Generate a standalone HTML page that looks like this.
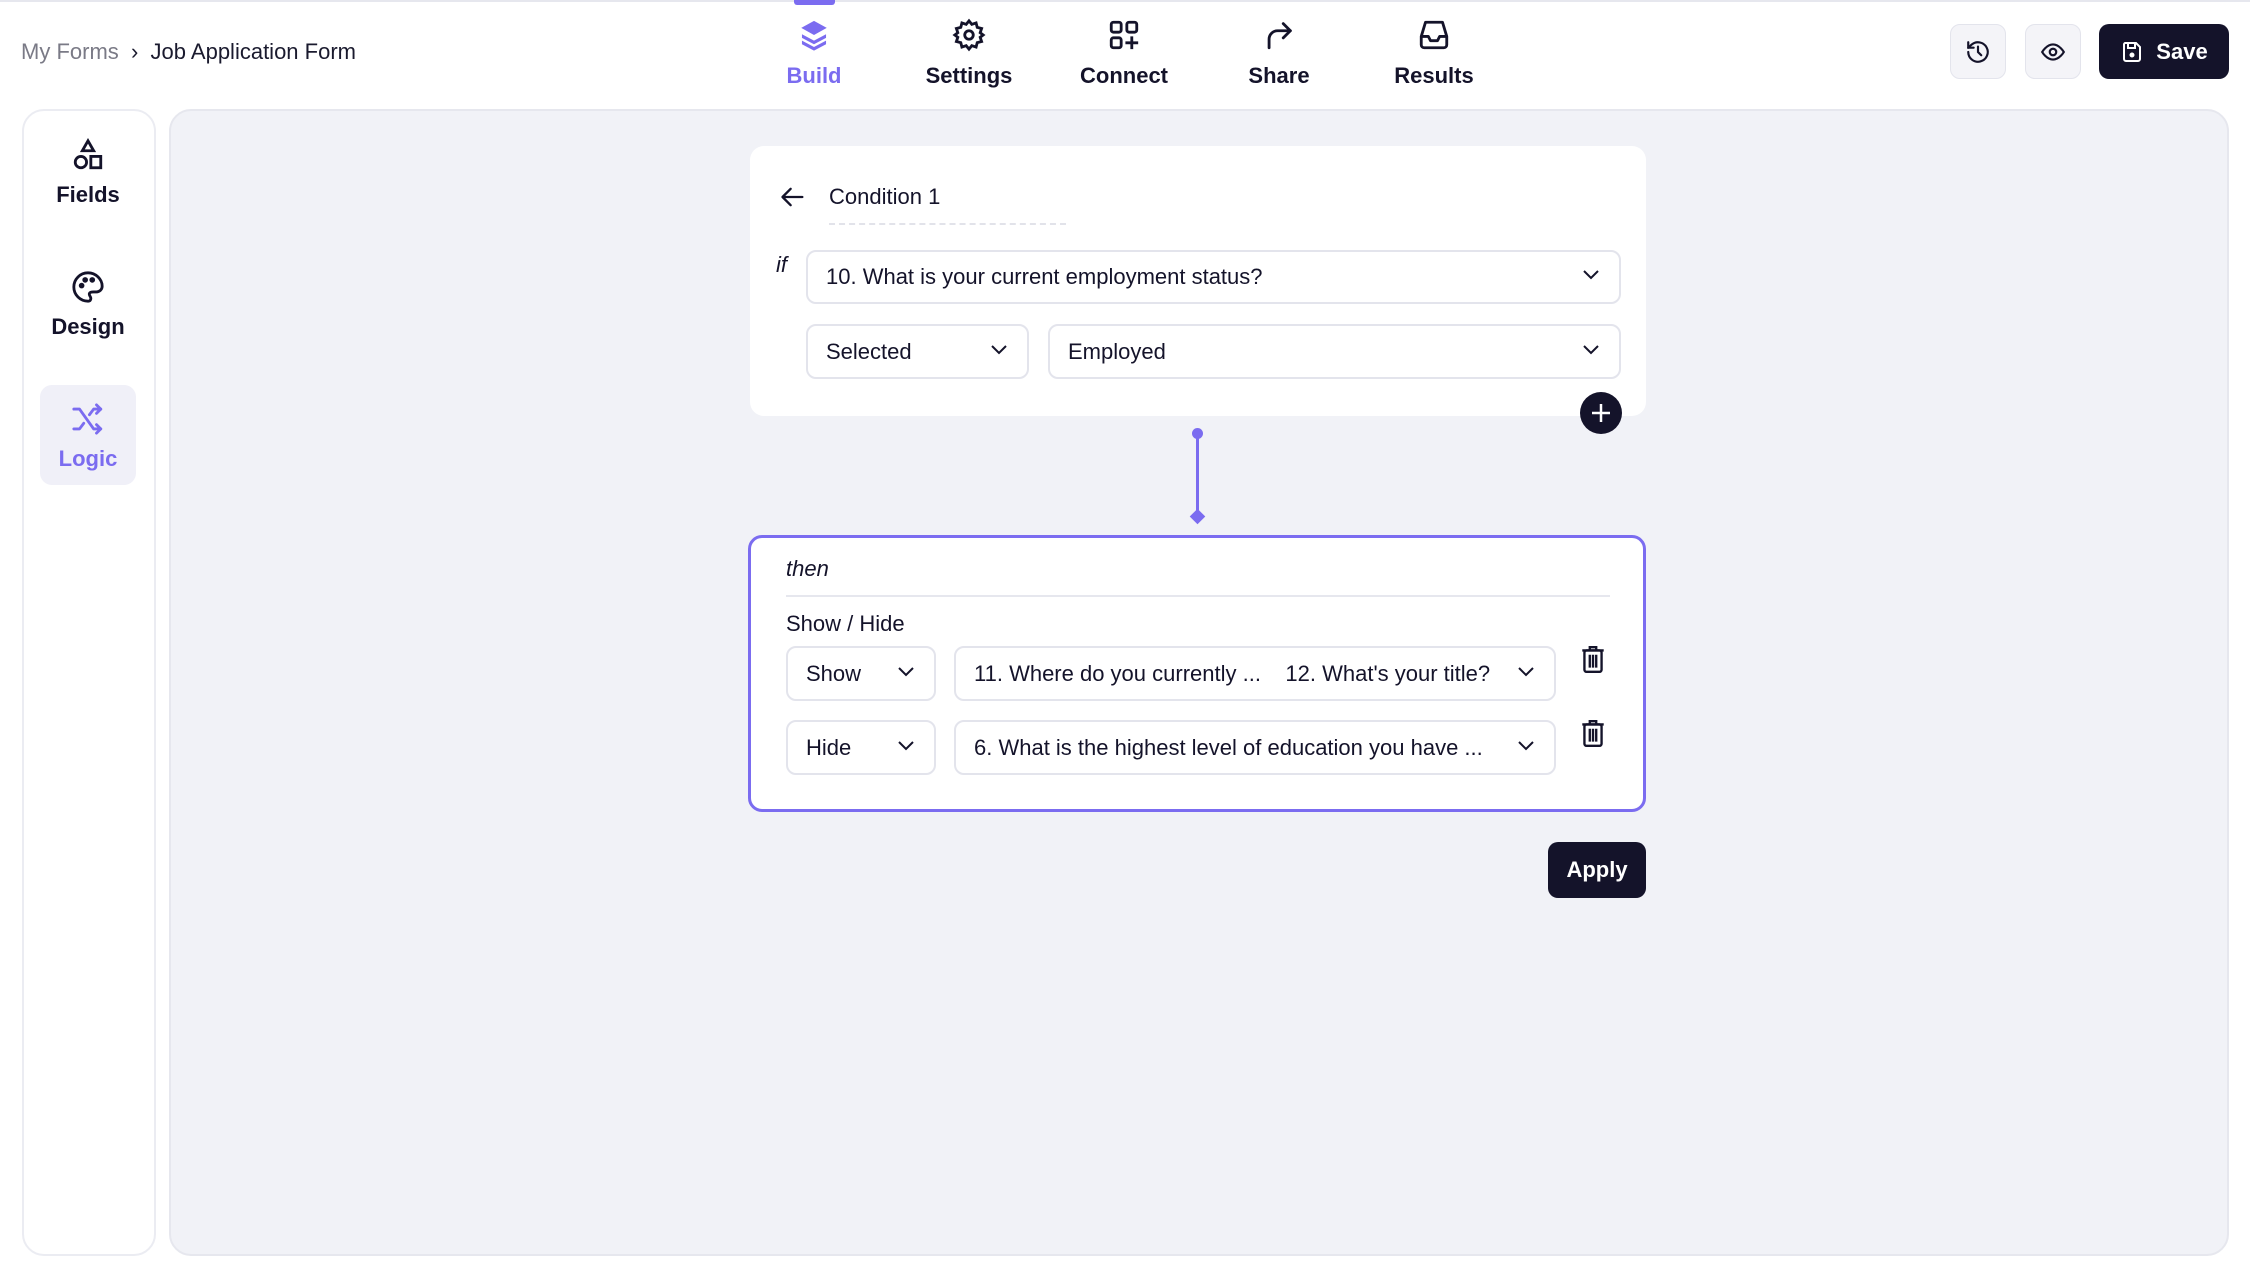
<!DOCTYPE html>
<html><head><meta charset="utf-8"><style>
*{box-sizing:border-box;margin:0;padding:0}
body{width:2250px;height:1275px;background:#fff;font-family:"Liberation Sans",sans-serif;color:#14132a;position:relative;overflow:hidden}
.a{position:absolute}
.topline{left:0;top:0;width:2250px;height:2px;background:#e6e7ee}
.bc{left:21px;top:39px;font-size:22px;color:#1a1a2e}
.bc span{color:#7a7a86}
.tab{top:18px;width:140px;text-align:center;font-size:22px;font-weight:bold}
.tab svg{display:block;margin:0 auto 11px}
.ibtn{top:24px;width:56px;height:55px;border:1px solid #e3e4ec;border-radius:10px;background:#f4f4f8;display:flex;align-items:center;justify-content:center}
.save{left:2099px;top:24px;width:130px;height:55px;background:#14132a;border-radius:10px;color:#fff;font-weight:bold;font-size:22px;display:flex;align-items:center;justify-content:center;gap:12px}
.side{left:22px;top:109px;width:134px;height:1147px;border:2px solid #ebecf2;border-radius:22px;background:#fff}
.sitem{width:96px;text-align:center;font-size:22px;font-weight:bold;left:40px}
.sitem svg{display:block;margin:0 auto 10px}
.canvas{left:169px;top:109px;width:2060px;height:1147px;background:#f1f2f7;border:2px solid #e6e7ee;border-radius:22px}
.card{background:#fff;border-radius:14px}
.sel{border:2px solid #e3e4ec;border-radius:10px;background:#fff;font-size:22px;display:flex;align-items:center;padding-left:18px}
.sel svg{position:absolute;right:18px;top:50%;margin-top:-11px}
</style></head><body>
<div class="a topline"></div>
<div class="a" style="left:794px;top:0;width:41px;height:5px;background:#7b6cf0;border-radius:0 0 3px 3px"></div>
<div class="a bc"><span>My Forms</span> &nbsp;›&nbsp; Job Application Form</div>

<div class="a tab" style="left:744px;color:#7b6cf0"><svg width="34" height="34" viewBox="0 0 24 24" fill="#7b6cf0"><path d="M12 2l9 5-9 5-9-5z"/><path d="M3.5 11.5L12 16l8.5-4.5 0 2.5L12 18.5 3.5 14z"/><path d="M3.5 16L12 20.5 20.5 16v2.5L12 23 3.5 18.5z"/></svg>Build</div>
<div class="a tab" style="left:899px"><svg width="34" height="34" viewBox="0 0 24 24" fill="none" stroke="#14132a" stroke-width="2"><circle cx="12" cy="12" r="3"/><path d="M12 2l2 2.5 3-1 .8 3.1 3.1.8-1 3L22 12l-2.1 1.6 1 3-3.1.8-.8 3.1-3-1L12 22l-2-2.5-3 1-.8-3.1-3.1-.8 1-3L2 12l2.1-1.6-1-3 3.1-.8.8-3.1 3 1z"/></svg>Settings</div>
<div class="a tab" style="left:1054px"><svg width="34" height="34" viewBox="0 0 24 24" fill="none" stroke="#14132a" stroke-width="2"><rect x="3" y="3" width="7" height="7" rx="1.5"/><rect x="14" y="3" width="7" height="7" rx="1.5"/><rect x="3" y="14" width="7" height="7" rx="1.5"/><path d="M17.5 13v9M13 17.5h9"/></svg>Connect</div>
<div class="a tab" style="left:1209px"><svg width="34" height="34" viewBox="0 0 24 24" fill="none" stroke="#14132a" stroke-width="2" stroke-linecap="round" stroke-linejoin="round"><path d="M15 4l5 5-5 5"/><path d="M20 9h-9a6 6 0 0 0-6 6v6"/></svg>Share</div>
<div class="a tab" style="left:1364px"><svg width="34" height="34" viewBox="0 0 24 24" fill="none" stroke="#14132a" stroke-width="2" stroke-linejoin="round"><path d="M6 3h12l3 10v6a2 2 0 0 1-2 2H5a2 2 0 0 1-2-2v-6z"/><path d="M3 13h5l1.5 3h5l1.5-3h5"/></svg>Results</div>

<div class="a ibtn" style="left:1950px"><svg width="26" height="26" viewBox="0 0 24 24" fill="none" stroke="#14132a" stroke-width="2" stroke-linecap="round"><path d="M3 12a9 9 0 1 0 3-6.7L3 8"/><path d="M3 3v5h5"/><path d="M12 7v5l3 3"/></svg></div>
<div class="a ibtn" style="left:2025px"><svg width="26" height="26" viewBox="0 0 24 24" fill="none" stroke="#14132a" stroke-width="2"><path d="M2 12s4-7 10-7 10 7 10 7-4 7-10 7S2 12 2 12z"/><circle cx="12" cy="12" r="3"/></svg></div>
<div class="a save"><svg width="24" height="24" viewBox="0 0 24 24" fill="none" stroke="#fff" stroke-width="2"><path d="M5 3h11l4 4v12a2 2 0 0 1-2 2H6a2 2 0 0 1-2-2V5a2 2 0 0 1 1-2z"/><path d="M8 3v5h7V3"/><circle cx="12" cy="15" r="1.5" fill="#fff"/></svg>Save</div>

<div class="a side"></div>
<div class="a sitem" style="top:138px"><svg width="34" height="34" viewBox="0 0 24 24" fill="none" stroke="#14132a" stroke-width="2"><path d="M12 2l4 7H8z"/><circle cx="7" cy="17" r="4"/><rect x="14" y="13" width="7" height="8"/></svg>Fields</div>
<div class="a sitem" style="top:270px"><svg width="34" height="34" viewBox="0 0 24 24" fill="none" stroke="#14132a" stroke-width="2"><path d="M12 2a10 10 0 0 0 0 20c1.5 0 2-1 2-2 0-1.5-1.5-2-1-3.5.5-1 2-1 3-1h2a4 4 0 0 0 4-4c0-5-4.5-9.5-10-9.5z"/><circle cx="7.5" cy="11" r="1" fill="#14132a"/><circle cx="10" cy="7" r="1" fill="#14132a"/><circle cx="15" cy="7" r="1" fill="#14132a"/></svg>Design</div>
<div class="a" style="left:40px;top:385px;width:96px;height:100px;background:#f0f0f8;border-radius:12px"></div>
<div class="a sitem" style="top:402px;color:#7b6cf0"><svg width="34" height="34" viewBox="0 0 24 24" fill="none" stroke="#7b6cf0" stroke-width="2" stroke-linecap="round" stroke-linejoin="round"><path d="M2 5h4l10 14h5"/><path d="M18 16l3 3-3 3"/><path d="M2 19h4l3-4"/><path d="M13 9l3-4h5"/><path d="M18 2l3 3-3 3"/></svg>Logic</div>

<div class="a canvas"></div>

<div class="a card" style="left:750px;top:146px;width:896px;height:270px"></div>
<svg class="a" style="left:778px;top:183px" width="30" height="28" viewBox="0 0 24 24" fill="none" stroke="#14132a" stroke-width="2" stroke-linecap="round" stroke-linejoin="round"><path d="M20 12H4M10 5l-7 7 7 7"/></svg>
<div class="a" style="left:829px;top:184px;font-size:22px">Condition 1</div>
<div class="a" style="left:829px;top:223px;width:237px;border-top:2px dashed #e2e3ea"></div>
<div class="a" style="left:776px;top:252px;font-size:22px;font-style:italic">if</div>
<div class="a sel" style="left:806px;top:250px;width:815px;height:54px">10. What is your current employment status?<svg width="20" height="18" viewBox="0 0 20 18" fill="none" stroke="#14132a" stroke-width="2"><path d="M3 5l7 7 7-7"/></svg></div>
<div class="a sel" style="left:806px;top:324px;width:223px;height:55px">Selected<svg width="20" height="18" viewBox="0 0 20 18" fill="none" stroke="#14132a" stroke-width="2"><path d="M3 5l7 7 7-7"/></svg></div>
<div class="a sel" style="left:1048px;top:324px;width:573px;height:55px">Employed<svg width="20" height="18" viewBox="0 0 20 18" fill="none" stroke="#14132a" stroke-width="2"><path d="M3 5l7 7 7-7"/></svg></div>
<div class="a" style="left:1580px;top:392px;width:42px;height:42px;border-radius:50%;background:#14132a"></div>
<svg class="a" style="left:1589px;top:401px" width="24" height="24" viewBox="0 0 24 24" stroke="#fff" stroke-width="2.5"><path d="M12 3v18M3 12h18"/></svg>

<div class="a" style="left:1196px;top:433px;width:3px;height:82px;background:#7b6cf0"></div>
<div class="a" style="left:1192px;top:428px;width:11px;height:11px;border-radius:50%;background:#7b6cf0"></div>
<div class="a" style="left:1192px;top:511px;width:11px;height:11px;background:#7b6cf0;transform:rotate(45deg)"></div>

<div class="a card" style="left:748px;top:535px;width:898px;height:277px;border:3px solid #7b6cf0"></div>
<div class="a" style="left:786px;top:556px;font-size:22px;font-style:italic">then</div>
<div class="a" style="left:786px;top:595px;width:824px;height:2px;background:#e6e7ee"></div>
<div class="a" style="left:786px;top:611px;font-size:22px">Show / Hide</div>
<div class="a sel" style="left:786px;top:646px;width:150px;height:55px">Show<svg width="20" height="18" viewBox="0 0 20 18" fill="none" stroke="#14132a" stroke-width="2"><path d="M3 5l7 7 7-7"/></svg></div>
<div class="a sel" style="left:954px;top:646px;width:602px;height:55px">11. Where do you currently ...&nbsp;&nbsp;&nbsp;&nbsp;12. What's your title?<svg width="20" height="18" viewBox="0 0 20 18" fill="none" stroke="#14132a" stroke-width="2"><path d="M3 5l7 7 7-7"/></svg></div>
<div class="a sel" style="left:786px;top:720px;width:150px;height:55px">Hide<svg width="20" height="18" viewBox="0 0 20 18" fill="none" stroke="#14132a" stroke-width="2"><path d="M3 5l7 7 7-7"/></svg></div>
<div class="a sel" style="left:954px;top:720px;width:602px;height:55px">6. What is the highest level of education you have ...<svg width="20" height="18" viewBox="0 0 20 18" fill="none" stroke="#14132a" stroke-width="2"><path d="M3 5l7 7 7-7"/></svg></div>
<svg class="a" style="left:1580px;top:644px" width="26" height="30" viewBox="0 0 24 28" fill="none" stroke="#14132a" stroke-width="2.2"><path d="M2 6h20M9 6V3h6v3"/><rect x="4" y="6" width="16" height="20" rx="2"/><path d="M9 10v12M12 10v12M15 10v12"/></svg>
<svg class="a" style="left:1580px;top:718px" width="26" height="30" viewBox="0 0 24 28" fill="none" stroke="#14132a" stroke-width="2.2"><path d="M2 6h20M9 6V3h6v3"/><rect x="4" y="6" width="16" height="20" rx="2"/><path d="M9 10v12M12 10v12M15 10v12"/></svg>

<div class="a" style="left:1548px;top:842px;width:98px;height:56px;background:#14132a;border-radius:10px;color:#fff;font-weight:bold;font-size:22px;display:flex;align-items:center;justify-content:center">Apply</div>
</body></html>
